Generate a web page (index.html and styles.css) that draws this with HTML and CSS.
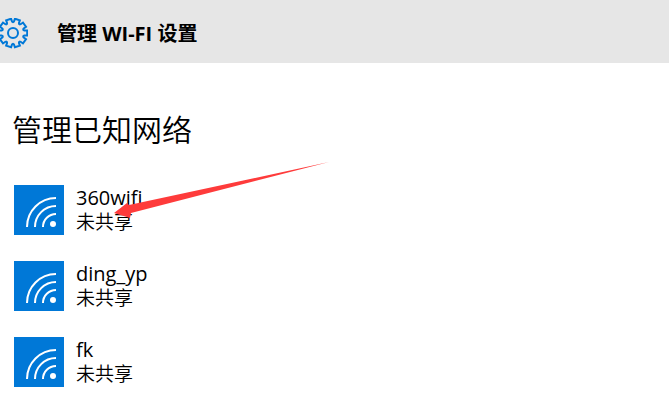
FILE: index.html
```html
<!DOCTYPE html>
<html lang="zh-CN">
<head>
    <meta charset="UTF-8">
    <title>管理 WI-FI 设置</title>
    <link rel="stylesheet" href="styles.css">
</head>
<body>
    <header class="header">
        <svg class="gear" width="30" height="32" viewBox="-15 -15 30 32">
            <defs>
                <path id="tooth" d="M9.8 -3.2L11.4 -2.6L14.2 -2.6V2.6L11.4 2.6L9.8 3.2"/>
            </defs>
            <use href="#tooth"/>
            <use href="#tooth" transform="rotate(36)"/>
            <use href="#tooth" transform="rotate(72)"/>
            <use href="#tooth" transform="rotate(108)"/>
            <use href="#tooth" transform="rotate(144)"/>
            <use href="#tooth" transform="rotate(180)"/>
            <use href="#tooth" transform="rotate(216)"/>
            <use href="#tooth" transform="rotate(252)"/>
            <use href="#tooth" transform="rotate(288)"/>
            <use href="#tooth" transform="rotate(324)"/>
            <circle r="5"/>
        </svg>
        <h1 class="title">管理 WI-FI 设置</h1>
    </header>

    <main class="content">
        <h2 class="heading">管理已知网络</h2>
        <ul class="networks">
            <li class="network">
                <svg class="wifi" viewBox="0 0 50 50">
                    <path d="M13 42A29 29 0 0 1 42 13M21 42A21 21 0 0 1 42 21M29 42A13 13 0 0 1 42 29"/>
                    <circle cx="39" cy="39" r="3"/>
                </svg>
                <div class="info">
                    <div class="name">360wifi</div>
                    <div class="status">未共享</div>
                </div>
                <svg class="arrow" width="216" height="58" viewBox="0 0 216 58">
                    <path d="M0 52L13 42L15 44L215 1L17 52L16 57Z"/>
                </svg>
            </li>
            <li class="network">
                <svg class="wifi" viewBox="0 0 50 50">
                    <path d="M13 42A29 29 0 0 1 42 13M21 42A21 21 0 0 1 42 21M29 42A13 13 0 0 1 42 29"/>
                    <circle cx="39" cy="39" r="3"/>
                </svg>
                <div class="info">
                    <div class="name">ding_yp</div>
                    <div class="status">未共享</div>
                </div>
            </li>
            <li class="network">
                <svg class="wifi" viewBox="0 0 50 50">
                    <path d="M13 42A29 29 0 0 1 42 13M21 42A21 21 0 0 1 42 21M29 42A13 13 0 0 1 42 29"/>
                    <circle cx="39" cy="39" r="3"/>
                </svg>
                <div class="info">
                    <div class="name">fk</div>
                    <div class="status">未共享</div>
                </div>
            </li>
        </ul>
    </main>
</body>
</html>
```

FILE: styles.css
```css
* {
    box-sizing: border-box;
    margin: 0;
    padding: 0;
}
body {
    background-color: #fff;
    color: #000;
    font-family: "Open Sans", "Noto Sans CJK SC", sans-serif;
}
.header {
    display: flex;
    align-items: center;
    gap: 29px;
    height: 63px;
    padding-top: 4px;
    background-color: #e6e6e6;
}
.gear {
    margin-left: -2px;
    fill: none;
    stroke: #0078d7;
    stroke-width: 2;
}
.title {
    font-size: 20px;
    line-height: 28px;
    font-weight: bold;
}
.content {
    padding: 45px 12px 0;
}
.heading {
    font-size: 30px;
    line-height: 44px;
    font-weight: 350;
}
.networks {
    margin-top: 33px;
    padding-left: 2px;
    list-style: none;
}
.network {
    position: relative;
    display: flex;
    gap: 12px;
    margin-bottom: 26px;
}
.wifi {
    width: 50px;
    height: 50px;
    background-color: #0078d7;
}
.wifi path {
    fill: none;
    stroke: #fff;
    stroke-width: 2;
}
.wifi circle {
    fill: #fff;
}
.name {
    font-size: 20px;
    line-height: 25px;
}
.status {
    font-size: 19px;
    line-height: 25px;
    font-weight: 350;
}
/* red pointer lying over the first network */
.arrow {
    position: absolute;
    left: 100px;
    top: -24px;
    fill: #fe3b3b;
}
```
